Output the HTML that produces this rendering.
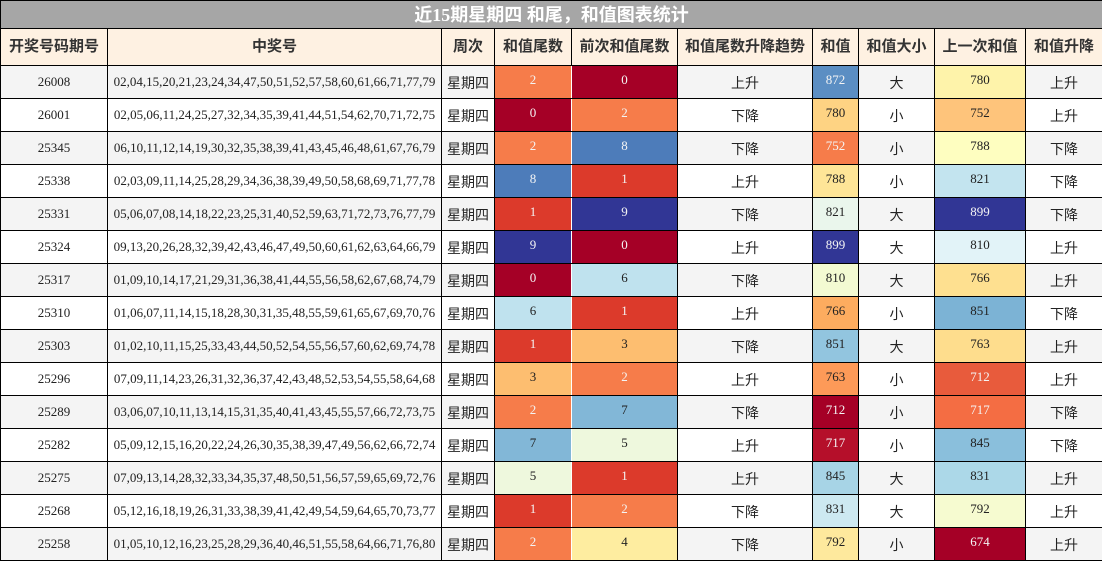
<!DOCTYPE html>
<html><head><meta charset="utf-8"><style>
body{margin:0;background:#fff;width:1102px;height:561px;overflow:hidden}
table{border-collapse:collapse;table-layout:fixed;width:1102px;font-family:"Liberation Serif","Noto Serif CJK SC",serif;font-size:13px;color:#222}
td,th{border:1px solid #000;padding:0;text-align:center;vertical-align:middle;white-space:nowrap;overflow:hidden;line-height:16px}
tr.t{height:28px}
.t td{background:#a6a6a6;color:#fff;font-weight:bold;font-size:18px;font-family:"Liberation Serif","Noto Sans CJK SC",sans-serif;line-height:20px}
tr.h{height:37px}
.h th{background:#fef1e2;color:#333;font-weight:bold;font-size:15px;font-family:"Liberation Sans","Noto Sans CJK SC",sans-serif}
tr.r{height:33px}
tr.r:nth-child(odd) td{background:#f4f4f4}
tr.r:nth-child(even) td{background:#fff}
.c{font-family:"Liberation Sans","Noto Sans CJK SC",sans-serif;font-size:14px;vertical-align:middle}
.c span{position:relative;top:1px}
td.n span{position:relative;top:-2px}
td.w{color:#f4f4f4}
td.nb{border-right-color:transparent}
</style></head><body>
<table>
<colgroup><col style="width:107px"><col style="width:334px"><col style="width:53px"><col style="width:77px"><col style="width:106px"><col style="width:135px"><col style="width:46px"><col style="width:76px"><col style="width:91px"><col style="width:77px"></colgroup>
<tr class="t"><td colspan="10">近15期星期四 和尾，和值图表统计</td></tr>
<tr class="h"><th>开奖号码期号</th><th>中奖号</th><th>周次</th><th>和值尾数</th><th>前次和值尾数</th><th>和值尾数升降趋势</th><th>和值</th><th>和值大小</th><th>上一次和值</th><th>和值升降</th></tr>
<tr class="r"><td>26008</td><td>02,04,15,20,21,23,24,34,47,50,51,52,57,58,60,61,66,71,77,79</td><td class="c"><span>星期四</span></td><td class="n w nb" style="background:#f67c4a"><span>2</span></td><td class="n w" style="background:#a50026"><span>0</span></td><td class="c"><span>上升</span></td><td class="n w" style="background:#5b8ec3"><span>872</span></td><td class="c"><span>大</span></td><td class="n" style="background:#fef3aa"><span>780</span></td><td class="c"><span>上升</span></td></tr>
<tr class="r"><td>26001</td><td>02,05,06,11,24,25,27,32,34,35,39,41,44,51,54,62,70,71,72,75</td><td class="c"><span>星期四</span></td><td class="n w nb" style="background:#a50026"><span>0</span></td><td class="n w" style="background:#f67c4a"><span>2</span></td><td class="c"><span>下降</span></td><td class="n" style="background:#fed383"><span>780</span></td><td class="c"><span>小</span></td><td class="n" style="background:#fec47b"><span>752</span></td><td class="c"><span>上升</span></td></tr>
<tr class="r"><td>25345</td><td>06,10,11,12,14,19,30,32,35,38,39,41,43,45,46,48,61,67,76,79</td><td class="c"><span>星期四</span></td><td class="n w nb" style="background:#f67c4a"><span>2</span></td><td class="n w" style="background:#4d7cba"><span>8</span></td><td class="c"><span>下降</span></td><td class="n w" style="background:#f67c4a"><span>752</span></td><td class="c"><span>小</span></td><td class="n" style="background:#fefec0"><span>788</span></td><td class="c"><span>下降</span></td></tr>
<tr class="r"><td>25338</td><td>02,03,09,11,14,25,28,29,34,36,38,39,49,50,58,68,69,71,77,78</td><td class="c"><span>星期四</span></td><td class="n w nb" style="background:#4d7cba"><span>8</span></td><td class="n w" style="background:#dc3a2b"><span>1</span></td><td class="c"><span>上升</span></td><td class="n" style="background:#fee597"><span>788</span></td><td class="c"><span>小</span></td><td class="n" style="background:#c3e4ef"><span>821</span></td><td class="c"><span>下降</span></td></tr>
<tr class="r"><td>25331</td><td>05,06,07,08,14,18,22,23,25,31,40,52,59,63,71,72,73,76,77,79</td><td class="c"><span>星期四</span></td><td class="n w nb" style="background:#dc3a2b"><span>1</span></td><td class="n w" style="background:#313695"><span>9</span></td><td class="c"><span>下降</span></td><td class="n" style="background:#eaf6ec"><span>821</span></td><td class="c"><span>大</span></td><td class="n w" style="background:#313695"><span>899</span></td><td class="c"><span>下降</span></td></tr>
<tr class="r"><td>25324</td><td>09,13,20,26,28,32,39,42,43,46,47,49,50,60,61,62,63,64,66,79</td><td class="c"><span>星期四</span></td><td class="n w nb" style="background:#313695"><span>9</span></td><td class="n w" style="background:#a50026"><span>0</span></td><td class="c"><span>上升</span></td><td class="n w" style="background:#313695"><span>899</span></td><td class="c"><span>大</span></td><td class="n" style="background:#e2f3f8"><span>810</span></td><td class="c"><span>上升</span></td></tr>
<tr class="r"><td>25317</td><td>01,09,10,14,17,21,29,31,36,38,41,44,55,56,58,62,67,68,74,79</td><td class="c"><span>星期四</span></td><td class="n w nb" style="background:#a50026"><span>0</span></td><td class="n" style="background:#bfe2ee"><span>6</span></td><td class="c"><span>下降</span></td><td class="n" style="background:#f3fad2"><span>810</span></td><td class="c"><span>大</span></td><td class="n" style="background:#fee090"><span>766</span></td><td class="c"><span>上升</span></td></tr>
<tr class="r"><td>25310</td><td>01,06,07,11,14,15,18,28,30,31,35,48,55,59,61,65,67,69,70,76</td><td class="c"><span>星期四</span></td><td class="n nb" style="background:#bfe2ee"><span>6</span></td><td class="n w" style="background:#dc3a2b"><span>1</span></td><td class="c"><span>上升</span></td><td class="n" style="background:#fdac5f"><span>766</span></td><td class="c"><span>小</span></td><td class="n" style="background:#7cb3d5"><span>851</span></td><td class="c"><span>下降</span></td></tr>
<tr class="r"><td>25303</td><td>01,02,10,11,15,25,33,43,44,50,52,54,55,56,57,60,62,69,74,78</td><td class="c"><span>星期四</span></td><td class="n w nb" style="background:#dc3a2b"><span>1</span></td><td class="n" style="background:#fdbe70"><span>3</span></td><td class="c"><span>下降</span></td><td class="n" style="background:#92c5df"><span>851</span></td><td class="c"><span>大</span></td><td class="n" style="background:#fedd8d"><span>763</span></td><td class="c"><span>上升</span></td></tr>
<tr class="r"><td>25296</td><td>07,09,11,14,23,26,31,32,36,37,42,43,48,52,53,54,55,58,64,68</td><td class="c"><span>星期四</span></td><td class="n nb" style="background:#fdbe70"><span>3</span></td><td class="n w" style="background:#f67c4a"><span>2</span></td><td class="c"><span>上升</span></td><td class="n" style="background:#fd9a58"><span>763</span></td><td class="c"><span>小</span></td><td class="n w" style="background:#e85b3c"><span>712</span></td><td class="c"><span>上升</span></td></tr>
<tr class="r"><td>25289</td><td>03,06,07,10,11,13,14,15,31,35,40,41,43,45,55,57,66,72,73,75</td><td class="c"><span>星期四</span></td><td class="n w nb" style="background:#f67c4a"><span>2</span></td><td class="n" style="background:#82b7d7"><span>7</span></td><td class="c"><span>下降</span></td><td class="n w" style="background:#a50026"><span>712</span></td><td class="c"><span>小</span></td><td class="n w" style="background:#f46d43"><span>717</span></td><td class="c"><span>下降</span></td></tr>
<tr class="r"><td>25282</td><td>05,09,12,15,16,20,22,24,26,30,35,38,39,47,49,56,62,66,72,74</td><td class="c"><span>星期四</span></td><td class="n nb" style="background:#82b7d7"><span>7</span></td><td class="n" style="background:#eef8dd"><span>5</span></td><td class="c"><span>上升</span></td><td class="n w" style="background:#b50f2a"><span>717</span></td><td class="c"><span>小</span></td><td class="n" style="background:#8abfdc"><span>845</span></td><td class="c"><span>下降</span></td></tr>
<tr class="r"><td>25275</td><td>07,09,13,14,28,32,33,34,35,37,48,50,51,56,57,59,65,69,72,76</td><td class="c"><span>星期四</span></td><td class="n nb" style="background:#eef8dd"><span>5</span></td><td class="n w" style="background:#dc3a2b"><span>1</span></td><td class="c"><span>上升</span></td><td class="n" style="background:#a7d4e6"><span>845</span></td><td class="c"><span>大</span></td><td class="n" style="background:#acd8e8"><span>831</span></td><td class="c"><span>上升</span></td></tr>
<tr class="r"><td>25268</td><td>05,12,16,18,19,26,31,33,38,39,41,42,49,54,59,64,65,70,73,77</td><td class="c"><span>星期四</span></td><td class="n w nb" style="background:#dc3a2b"><span>1</span></td><td class="n w" style="background:#f67c4a"><span>2</span></td><td class="c"><span>下降</span></td><td class="n" style="background:#cde9f1"><span>831</span></td><td class="c"><span>大</span></td><td class="n" style="background:#f6fbd0"><span>792</span></td><td class="c"><span>上升</span></td></tr>
<tr class="r"><td>25258</td><td>01,05,10,12,16,23,25,28,29,36,40,46,51,55,58,64,66,71,76,80</td><td class="c"><span>星期四</span></td><td class="n w nb" style="background:#f67c4a"><span>2</span></td><td class="n" style="background:#feeda0"><span>4</span></td><td class="c"><span>下降</span></td><td class="n" style="background:#fee99d"><span>792</span></td><td class="c"><span>小</span></td><td class="n w" style="background:#a50026"><span>674</span></td><td class="c"><span>上升</span></td></tr>
</table>
</body></html>
